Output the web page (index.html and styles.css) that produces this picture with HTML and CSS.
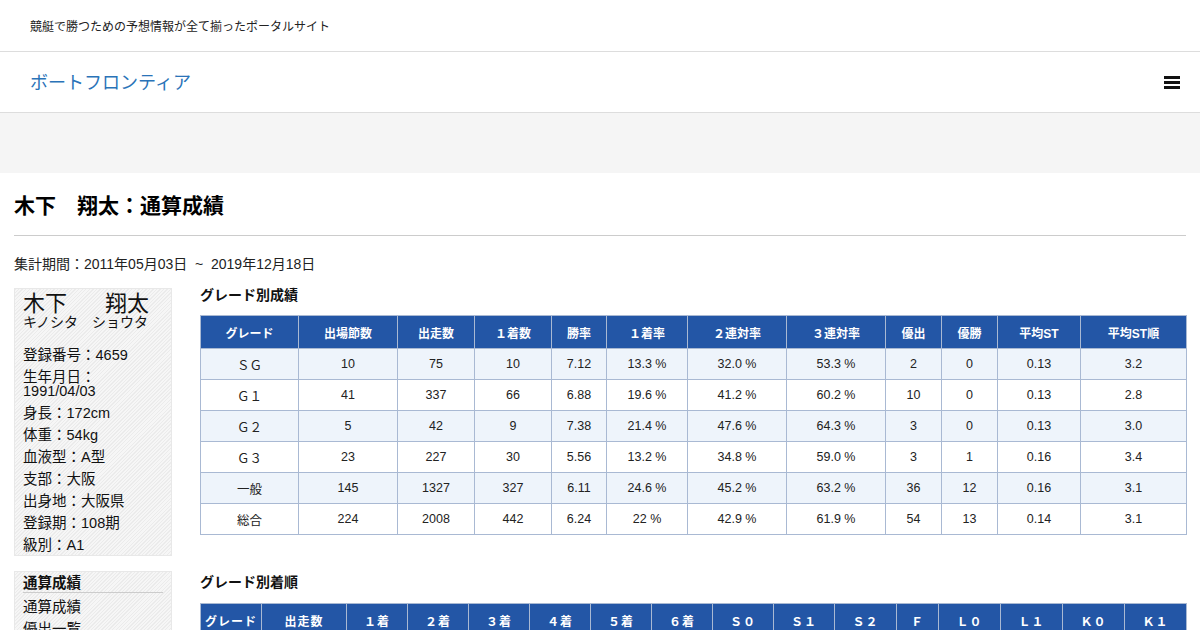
FILE: index.html
```html
<!DOCTYPE html>
<html lang="ja">
<head>
<meta charset="utf-8">
<title>木下 翔太：通算成績</title>
<link rel="stylesheet" href="styles.css">
</head>
<body>
<header>
  <div class="topbar">競艇で勝つための予想情報が全て揃ったポータルサイト</div>
  <div class="navbar">
    <a class="logo" href="#">ボートフロンティア</a>
    <span class="burger"><i></i><i></i><i></i></span>
  </div>
  <div class="band"></div>
</header>
<main class="content">
  <h1 class="title">木下　翔太：通算成績</h1>
  <div class="period">集計期間：2011年05月03日 &nbsp;~&nbsp; 2019年12月18日</div>
  <div class="layout">
    <aside class="side">
      <div class="box profile">
        <div class="name"><span>木下</span><span>翔太</span></div>
        <div class="kana">キノシタ　ショウタ</div>
        <p>登録番号：4659</p>
        <p>生年月日：<br>1991/04/03</p>
        <p>身長：172cm</p>
        <p>体重：54kg</p>
        <p>血液型：A型</p>
        <p>支部：大阪</p>
        <p>出身地：大阪県</p>
        <p>登録期：108期</p>
        <p>級別：A1</p>
      </div>
      <div class="box menu">
        <div class="menu-title">通算成績</div>
        <p>通算成績</p>
        <p>優出一覧</p>
      </div>
    </aside>
    <section class="main">
      <h2 class="sec">グレード別成績</h2>
      <table class="grid t1">
        <colgroup>
          <col class="c98"><col class="c99"><col class="c77"><col class="c77"><col class="c55"><col class="c81"><col class="c99"><col class="c99"><col class="c56"><col class="c56"><col class="c83"><col>
        </colgroup>
        <thead>
          <tr><th>グレード</th><th>出場節数</th><th>出走数</th><th>１着数</th><th>勝率</th><th>１着率</th><th>２連対率</th><th>３連対率</th><th>優出</th><th>優勝</th><th>平均ST</th><th>平均ST順</th></tr>
        </thead>
        <tbody>
          <tr class="alt"><td>ＳＧ</td><td>10</td><td>75</td><td>10</td><td>7.12</td><td>13.3 %</td><td>32.0 %</td><td>53.3 %</td><td>2</td><td>0</td><td>0.13</td><td>3.2</td></tr>
          <tr><td>Ｇ１</td><td>41</td><td>337</td><td>66</td><td>6.88</td><td>19.6 %</td><td>41.2 %</td><td>60.2 %</td><td>10</td><td>0</td><td>0.13</td><td>2.8</td></tr>
          <tr class="alt"><td>Ｇ２</td><td>5</td><td>42</td><td>9</td><td>7.38</td><td>21.4 %</td><td>47.6 %</td><td>64.3 %</td><td>3</td><td>0</td><td>0.13</td><td>3.0</td></tr>
          <tr><td>Ｇ３</td><td>23</td><td>227</td><td>30</td><td>5.56</td><td>13.2 %</td><td>34.8 %</td><td>59.0 %</td><td>3</td><td>1</td><td>0.16</td><td>3.4</td></tr>
          <tr class="alt"><td>一般</td><td>145</td><td>1327</td><td>327</td><td>6.11</td><td>24.6 %</td><td>45.2 %</td><td>63.2 %</td><td>36</td><td>12</td><td>0.16</td><td>3.1</td></tr>
          <tr><td>総合</td><td>224</td><td>2008</td><td>442</td><td>6.24</td><td>22 %</td><td>42.9 %</td><td>61.9 %</td><td>54</td><td>13</td><td>0.14</td><td>3.1</td></tr>
        </tbody>
      </table>
      <h2 class="sec sec2">グレード別着順</h2>
      <table class="grid t2">
        <colgroup>
          <col class="c61"><col class="c85"><col class="c61"><col class="c61"><col class="c61"><col class="c61"><col class="c61"><col class="c61"><col class="c61"><col class="c61"><col class="c62"><col class="c42"><col class="c62"><col class="c62"><col class="c62"><col>
        </colgroup>
        <thead>
          <tr><th>グレード</th><th>出走数</th><th>１着</th><th>２着</th><th>３着</th><th>４着</th><th>５着</th><th>６着</th><th>Ｓ０</th><th>Ｓ１</th><th>Ｓ２</th><th>Ｆ</th><th>Ｌ０</th><th>Ｌ１</th><th>Ｋ０</th><th>Ｋ１</th></tr>
        </thead>
        <tbody>
          <tr class="alt"><td>ＳＧ</td><td>75</td><td>10</td><td>14</td><td>16</td><td>11</td><td>13</td><td>11</td><td>0</td><td>0</td><td>0</td><td>0</td><td>0</td><td>0</td><td>0</td><td>0</td></tr>
        </tbody>
      </table>
    </section>
  </div>
</main>
</body>
</html>
```

FILE: styles.css
```css
* { box-sizing: border-box; }
html, body { margin: 0; padding: 0; }
body {
  font-family: "Liberation Sans", "Noto Sans CJK JP", sans-serif;
  color: #222;
  background: #fff;
  overflow: hidden;
}
.topbar {
  height: 52px;
  padding: 18px 30px 0;
  font-size: 12px;
  line-height: 18px;
  border-bottom: 1px solid #ddd;
}
.navbar {
  height: 61px;
  padding: 0 20px 0 30px;
  display: flex;
  align-items: center;
  justify-content: space-between;
  border-bottom: 1px solid #ddd;
}
.logo {
  color: #2a73b8;
  text-decoration: none;
  font-size: 18px;
  line-height: 24px;
  margin-top: 1px;
}
.burger {
  display: flex;
  flex-direction: column;
  gap: 2px;
  width: 16px;
  margin-top: 1px;
}
.burger i {
  display: block;
  height: 3px;
  background: #111;
}
.band {
  height: 60px;
  background: #f5f5f5;
}
.content { padding: 0 14px; }
.title {
  margin: 0;
  padding: 17px 0 13px;
  font-size: 21px;
  line-height: 32px;
  font-weight: bold;
  color: #000;
  border-bottom: 1px solid #ccc;
}
.period {
  font-size: 14px;
  line-height: 20px;
  padding: 18px 0 14px;
}
.layout {
  display: flex;
  gap: 28px;
  align-items: flex-start;
}
.side {
  width: 158px;
  flex: none;
  display: flex;
  flex-direction: column;
  gap: 15px;
}
.box {
  background-color: #f2f2f2;
  background-image: repeating-linear-gradient(-45deg, #ebebeb 0 1px, #f6f6f6 1px 2.5px);
  border: 1px solid #e8e8e8;
  padding: 4px 8px 3px 8px;
  color: #111;
}
.name {
  display: flex;
  justify-content: space-between;
  font-size: 22px;
  line-height: 22px;
  padding-right: 14px;
}
.kana {
  font-size: 14px;
  line-height: 14px;
  margin-bottom: 19px;
}
.box p {
  margin: 0 0 8px;
  font-size: 14.5px;
  line-height: 14px;
}
.box p:last-child { margin-bottom: 0; }
.menu { padding-top: 3px; padding-bottom: 0; height: 62px; overflow: hidden; }
.menu-title {
  font-weight: bold;
  font-size: 14.5px;
  line-height: 16px;
  padding-bottom: 1px;
  border-bottom: 1px solid #ccc;
  margin-bottom: 7px;
}
.main {
  flex: 1;
  min-width: 0;
}
.sec {
  margin: 0;
  font-size: 14px;
  line-height: 16px;
  font-weight: bold;
  color: #111;
  padding: 0 0 12px;
  margin-top: -1px;
}
.sec2 { padding-top: 39px; margin-top: 0; padding-bottom: 13px; }
.grid {
  width: 987px;
  border-collapse: collapse;
  table-layout: fixed;
  font-size: 12.5px;
}
.grid th, .grid td {
  border: 1px solid #a9b9d3;
  text-align: center;
  padding: 0 2px;
}
.grid th {
  background: #2356a6;
  color: #fff;
  font-weight: bold;
  font-size: 12px;
  height: 33px;
}
.grid td {
  height: 31px;
  color: #222;
}
.grid tr.alt td { background: #eef4fb; }
.t2 th { letter-spacing: 1px; }
.c98 { width: 98px; }
.c99 { width: 99px; }
.c77 { width: 77px; }
.c55 { width: 55px; }
.c81 { width: 81px; }
.c56 { width: 56px; }
.c83 { width: 83px; }
.c61 { width: 61px; }
.c85 { width: 85px; }
.c62 { width: 62px; }
.c42 { width: 42px; }
```
